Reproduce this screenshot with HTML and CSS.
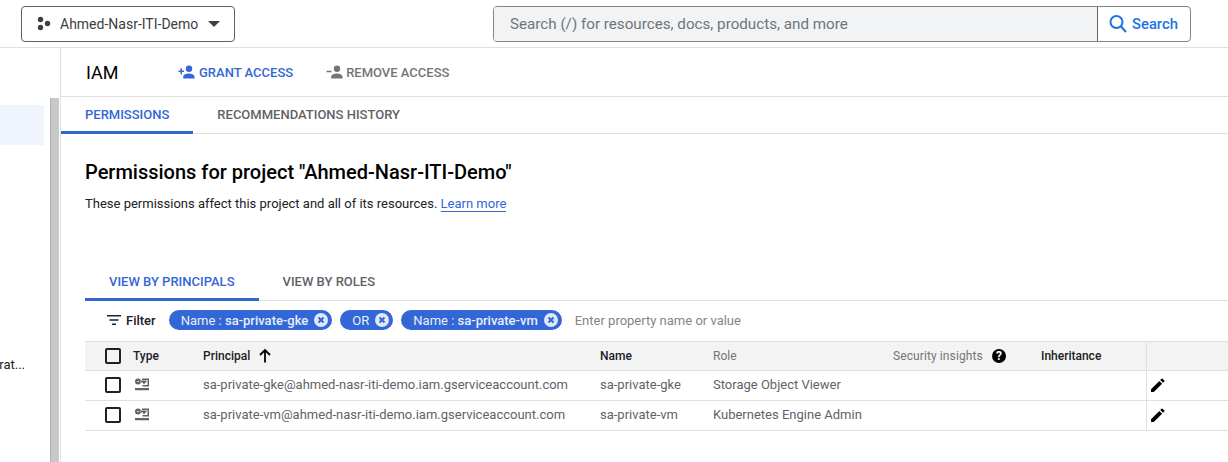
FILE: index.html
```html
<!DOCTYPE html>
<html lang="en">
<head>
    <meta charset="UTF-8">
    <title>IAM</title>
    <link rel="stylesheet" href="styles.css">
</head>
<body>
    <header class="topbar">
        <button class="project-picker">
            <svg class="project-icon" width="16" height="16" viewBox="0 0 16 16"><circle cx="4.5" cy="3.5" r="2.7"/><circle cx="4.5" cy="11.5" r="2.7"/><circle cx="11.5" cy="7.5" r="2.7"/></svg>
            <span>Ahmed-Nasr-ITI-Demo</span>
            <span class="caret"></span>
        </button>
        <div class="search">
            <div class="search-input">Search (/) for resources, docs, products, and more</div>
            <div class="search-btn">
                <svg width="20" height="20" viewBox="0 0 20 20" fill="none" stroke="#1a73e8" stroke-width="2"><circle cx="8.5" cy="8" r="6"/><path d="M13 12.5l5 5.5"/></svg>
                <span>Search</span>
            </div>
        </div>
    </header>

    <div class="layout">
        <aside class="sidebar">
            <div class="side-list">
                <div class="side-active"></div>
                <div class="side-text">erat...</div>
            </div>
            <div class="side-scroll"></div>
        </aside>

        <main class="content">
            <div class="page-head">
                <h1>IAM</h1>
                <span class="action action-grant">
                    <svg width="17" height="16" viewBox="0 0 16 16" fill="#3367d6"><path d="M10.5 8a3.2 3.2 0 1 0 0-6.400a3.200 3.200 0 0 0 0 6.400zM3.500 6.500V4.200H2v2.300H0V8h2v2.300h1.500V8h2V6.500zM10.500 9.500c-2.200 0-5.800 1.100-5.800 3.200V14.500h11.300v-1.800c0-2.100-3.300-3.200-5.500-3.200z"/></svg>
                    GRANT ACCESS
                </span>
                <span class="action action-remove">
                    <svg width="17" height="16" viewBox="0 0 16 16" fill="#757575"><path d="M10.500 8a3.200 3.200 0 1 0 0-6.400a3.200 3.200 0 0 0 0 6.400zM0 6.700h5V8.200H0zM10.500 9.500c-2.200 0-5.800 1.100-5.800 3.200V14.500h11.300v-1.800c0-2.100-3.300-3.200-5.500-3.200z"/></svg>
                    REMOVE ACCESS
                </span>
            </div>

            <nav class="tabs tabs-page">
                <span class="tab tab-active">PERMISSIONS</span>
                <span class="tab">RECOMMENDATIONS HISTORY</span>
            </nav>

            <section class="permissions">
                <h2>Permissions for project "Ahmed-Nasr-ITI-Demo"</h2>
                <p class="intro">These permissions affect this project and all of its resources. <a href="#">Learn more</a></p>

                <nav class="tabs tabs-view">
                    <span class="tab tab-active">VIEW BY PRINCIPALS</span>
                    <span class="tab">VIEW BY ROLES</span>
                </nav>

                <div class="filter-row">
                    <svg class="filter-icon" width="18" height="18" viewBox="0 0 18 18" fill="#202124"><path d="M2 4h14v1.500H2zM4.500 8.300h9v1.500h-9zM7 12.500h4V14H7z"/></svg>
                    <span class="filter-label">Filter</span>
                    <span class="chip">Name : <b>sa-private-gke</b><svg class="chip-x" width="16" height="16" viewBox="0 0 16 16"><circle cx="8" cy="8" r="7"/><path d="M5.500 5.500l5 5M10.500 5.500l-5 5"/></svg></span>
                    <span class="chip">OR<svg class="chip-x" width="16" height="16" viewBox="0 0 16 16"><circle cx="8" cy="8" r="7"/><path d="M5.500 5.500l5 5M10.500 5.500l-5 5"/></svg></span>
                    <span class="chip">Name : <b>sa-private-vm</b><svg class="chip-x" width="16" height="16" viewBox="0 0 16 16"><circle cx="8" cy="8" r="7"/><path d="M5.500 5.500l5 5M10.500 5.500l-5 5"/></svg></span>
                    <span class="filter-hint">Enter property name or value</span>
                </div>

                <div class="table">
                    <div class="row row-head">
                        <span class="cell-check"><i class="checkbox"></i></span>
                        <span class="strong">Type</span>
                        <span class="strong principal-head">Principal
                            <svg width="16" height="16" viewBox="0 0 16 16" fill="none" stroke="#000" stroke-width="1.800"><path d="M8 14.500V2.500M3 7l5-5 5 5"/></svg>
                        </span>
                        <span class="strong">Name</span>
                        <span>Role</span>
                        <span class="insights">Security insights
                            <svg width="16" height="16" viewBox="0 0 16 16"><circle cx="8" cy="8" r="7"/><text x="8" y="12" text-anchor="middle" class="help-mark">?</text></svg>
                        </span>
                        <span class="strong">Inheritance</span>
                        <span class="cell-action"></span>
                    </div>

                    <div class="row">
                        <span class="cell-check"><i class="checkbox"></i></span>
                        <span><svg class="key-icon" width="16" height="16" viewBox="0 0 16 16" fill="#5f6368" fill-rule="evenodd"><path d="M5 1.500a3 3 0 1 1 0 6a3 3 0 0 1 0-6zM5 3.700a.8.800 0 1 0 0 1.600a.8.800 0 0 0 0-1.600zM7.500 3.500h6v2h-1.500v1.200h-2V5.500H7.500zM9 1.500h7V9.500H9.500V8H14.500V3H9zM2 11h14v2.200H2z"/></svg></span>
                        <span>sa-private-gke@ahmed-nasr-iti-demo.iam.gserviceaccount.com</span>
                        <span>sa-private-gke</span>
                        <span>Storage Object Viewer</span>
                        <span></span>
                        <span></span>
                        <span class="cell-action"><svg width="18" height="18" viewBox="0 0 18 18" fill="#000"><path d="M2 13.200V16h2.800l8.300-8.300l-2.800-2.800zM15.300 5.500a.8.800 0 0 0 0-1.100l-1.700-1.700a.8.800 0 0 0-1.100 0L11.200 4l2.800 2.800z"/></svg></span>
                    </div>

                    <div class="row">
                        <span class="cell-check"><i class="checkbox"></i></span>
                        <span><svg class="key-icon" width="16" height="16" viewBox="0 0 16 16" fill="#5f6368" fill-rule="evenodd"><path d="M5 1.500a3 3 0 1 1 0 6a3 3 0 0 1 0-6zM5 3.700a.8.800 0 1 0 0 1.600a.8.800 0 0 0 0-1.600zM7.500 3.500h6v2h-1.500v1.200h-2V5.500H7.500zM9 1.500h7V9.500H9.500V8H14.500V3H9zM2 11h14v2.200H2z"/></svg></span>
                        <span>sa-private-vm@ahmed-nasr-iti-demo.iam.gserviceaccount.com</span>
                        <span>sa-private-vm</span>
                        <span>Kubernetes Engine Admin</span>
                        <span></span>
                        <span></span>
                        <span class="cell-action"><svg width="18" height="18" viewBox="0 0 18 18" fill="#000"><path d="M2 13.200V16h2.800l8.300-8.300l-2.800-2.800zM15.300 5.500a.8.800 0 0 0 0-1.100l-1.700-1.700a.8.800 0 0 0-1.100 0L11.200 4l2.800 2.800z"/></svg></span>
                    </div>
                </div>
            </section>
        </main>
    </div>
</body>
</html>
```

FILE: styles.css
```css
* {
    margin: 0;
    padding: 0;
    box-sizing: border-box;
}

html, body {
    height: 462px;
    overflow: hidden;
}

body {
    font-family: Roboto, "Liberation Sans", sans-serif;
    background: #fff;
    color: #202124;
    font-size: 13px;
}

.topbar {
    height: 48px;
    border-bottom: 1px solid #e0e0e0;
    padding: 6px 37px 0 21px;
    display: flex;
    justify-content: space-between;
    align-items: flex-start;
}

.project-picker {
    width: 214px;
    height: 36px;
    background: #fff;
    border: 1px solid #5f6368;
    border-radius: 4px;
    display: flex;
    align-items: center;
    padding-left: 14px;
    font-family: inherit;
    font-size: 14px;
    color: #3c4043;
}

.project-icon {
    fill: #3c4043;
    margin-right: 8px;
    flex: none;
}

.caret {
    margin-left: 10px;
    border-left: 6px solid transparent;
    border-right: 6px solid transparent;
    border-top: 6px solid #3c4043;
}

.search {
    width: 698px;
    height: 36px;
    border: 1px solid #80868b;
    border-radius: 4px;
    display: flex;
    overflow: hidden;
}

.search-input {
    flex: 1;
    background: #f1f3f4;
    color: #70757a;
    font-size: 15.200px;
    line-height: 34px;
    padding-left: 16px;
    border-right: 1px solid #5f6368;
}

.search-btn {
    width: 92px;
    display: flex;
    align-items: center;
    gap: 4px;
    padding-left: 10px;
    color: #1a73e8;
    font-size: 14.800px;
    font-weight: 500;
}

.layout {
    display: flex;
    height: 414px;
}

.sidebar {
    width: 61px;
    flex: none;
    border-right: 1px solid #e0e0e0;
    display: flex;
}

.side-list {
    width: 50px;
    padding-top: 57px;
}

.side-active {
    width: 44px;
    height: 40px;
    background: #eff4fd;
}

.side-text {
    margin: 212px 0 0 -10px;
    text-align: right;
    padding-right: 25px;
    font-size: 13px;
    color: #202124;
    line-height: 16px;
}

.side-scroll {
    width: 9px;
    margin-top: 50px;
    background: #c8c8c8;
    border-left: 1px solid #b0b0b0;
}

.content {
    flex: 1;
    min-width: 0;
}

.page-head {
    height: 49px;
    border-bottom: 1px solid #e0e0e0;
    display: flex;
    align-items: center;
    padding-left: 25px;
}

.page-head h1 {
    font-size: 18px;
    font-weight: 400;
    color: #000;
    width: 92px;
}

.action {
    display: flex;
    align-items: center;
    gap: 4px;
    font-size: 13px;
    font-weight: 500;
}

.action-grant {
    color: #3367d6;
    margin-right: 33px;
}

.action-remove {
    color: #757575;
    gap: 3px;
}

.tabs {
    display: flex;
    border-bottom: 1px solid #e0e0e0;
}

.tab {
    font-size: 13px;
    font-weight: 500;
    color: #5f6368;
    padding: 0 24px;
    display: flex;
    align-items: center;
    margin-bottom: -1px;
    border-bottom: 3px solid transparent;
}

.tab-active {
    color: #3367d6;
    border-bottom-color: #3367d6;
}

.tabs-page {
    height: 37px;
}

.permissions {
    padding-left: 24px;
}

.permissions h2 {
    font-size: 20px;
    font-weight: 500;
    color: #000;
    margin-top: 26px;
    line-height: 24px;
}

.intro {
    margin-top: 11px;
    line-height: 18px;
    color: #202124;
}

.intro a {
    color: #3367d6;
    text-decoration: none;
    border-bottom: 1px solid #3367d6;
}

.tabs-view {
    height: 36px;
    margin-top: 52px;
}

.filter-row {
    height: 40px;
    display: flex;
    align-items: center;
    padding: 0 0 2px 20px;
}

.filter-icon {
    margin-right: 3px;
}

.filter-label {
    font-size: 13px;
    font-weight: 500;
    margin-right: 13px;
    color: #202124;
}

.chip {
    height: 20px;
    background: #3367d6;
    color: #e8eefb;
    border-radius: 10px;
    display: flex;
    align-items: center;
    padding: 0 3px 0 12px;
    font-size: 13px;
    margin-right: 8px;
    white-space: pre;
}

.chip b {
    font-weight: 500;
}

.chip-x {
    margin-left: 5px;
}

.chip-x circle {
    fill: #dfe7f8;
}

.chip-x path {
    stroke: #3367d6;
    stroke-width: 2;
    fill: none;
}

.filter-hint {
    margin-left: 5px;
    font-size: 13px;
    color: #80868b;
}

.row {
    display: grid;
    grid-template-columns: 48px 70px 397px 113px 180px 148px 105px 1fr;
    height: 30px;
    align-items: center;
    border-bottom: 1px solid #e0e0e0;
    font-size: 13px;
    color: #5f6368;
    white-space: nowrap;
}

.row > span {
    margin-bottom: 2px;
}

.row > .cell-action {
    margin-bottom: 0;
}

.cell-action svg {
    margin-top: -2px;
}

.row-head {
    height: 30px;
    background: #f3f3f3;
    border-top: 1px solid #e0e0e0;
    font-size: 12px;
    color: #757575;
}

.row-head > span {
    margin-bottom: 0;
}

.strong {
    color: #202124;
    font-weight: 500;
}

.cell-check {
    padding-left: 20px;
    display: flex;
}

.checkbox {
    width: 16px;
    height: 16px;
    border: 2px solid #202124;
    border-radius: 2px;
}

.principal-head, .insights {
    display: flex;
    align-items: center;
    gap: 7px;
}

.insights {
    gap: 8px;
    letter-spacing: .1px;
}

.help-mark {
    fill: #fff;
    font-size: 12px;
    font-weight: 700;
}

.key-icon {
    display: block;
}

.cell-action {
    height: 100%;
    border-left: 1px solid #e0e0e0;
    padding-left: 2px;
    display: flex;
    align-items: center;
}
```
